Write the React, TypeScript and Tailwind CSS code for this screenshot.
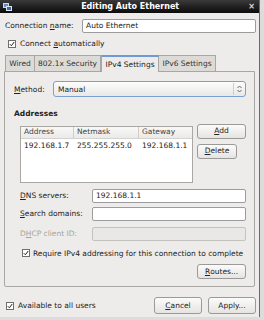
import React from 'react';

const font = { fontFamily: '"DejaVu Sans", sans-serif' };

const Check = () => (
  <span className="inline-flex items-center justify-center w-[8px] h-[8px] border border-[#6e6e6e] bg-white">
    <svg width="6" height="6" viewBox="0 0 6 6">
      <path d="M0.8 3.2 L2.4 4.8 L5.2 1" fill="none" stroke="#222" strokeWidth="1" />
    </svg>
  </span>
);

const Btn = ({ children, className = '' }: { children: React.ReactNode; className?: string }) => (
  <div
    className={`flex items-center justify-center border border-[#9a9a9a] rounded-[3px] bg-gradient-to-b from-[#fbfbfa] to-[#e6e4e1] text-[7.5px] text-[#222] ${className}`}
  >
    {children}
  </div>
);

const Field = ({ value = '', disabled = false, className = '' }: { value?: string; disabled?: boolean; className?: string }) => (
  <div
    className={`flex items-center px-[3px] border rounded-[2px] text-[7.5px] ${
      disabled ? 'border-[#c4c2bf] bg-[#e9e8e6]' : 'border-[#9c9c9c] bg-white'
    } ${className}`}
  >
    {value}
  </div>
);

export default function App() {
  return (
    <div className="w-[264px] h-[320px] bg-[#dcdcdc] overflow-hidden text-[#222] text-[7.5px]" style={font}>
      <div className="w-[260px] h-[317px] flex flex-col bg-[#edecea] border-r border-[#6a6a6a]">
        {/* title bar */}
        <div className="h-[13px] flex items-center bg-gradient-to-b from-[#3a3a3a] to-[#0c0c0c] px-[3px]">
          <div className="w-[9px] h-[8px] relative">
            <div className="absolute left-0 top-0 w-[6px] h-[5px] bg-[#6d8cbf] border border-[#cfd8e6]" />
            <div className="absolute left-[3px] top-[3px] w-[6px] h-[5px] bg-[#3e69b5] border border-[#dfe6f0]" />
          </div>
          <div className="flex-1 text-center text-white font-bold text-[8px]">Editing Auto Ethernet</div>
          <div className="text-[#ddd] text-[8px] font-bold pr-[1px]">×</div>
        </div>

        {/* connection name */}
        <div className="flex items-center mt-[6px] pl-[5px] pr-[3px]">
          <span className="w-[77px]">
            Connection <u>n</u>ame:
          </span>
          <Field value="Auto Ethernet" className="flex-1 h-[14px]" />
        </div>
        <div className="flex items-center gap-[4px] mt-[5px] pl-[8px]">
          <Check />
          <span>
            Connect <u>a</u>utomatically
          </span>
        </div>

        {/* tabs */}
        <div className="flex items-end mt-[5px] pl-[5px] h-[17px]">
          <div className="h-[16px] flex items-center justify-center text-[#333] bg-[#dddbd7] border border-[#a9a7a3] border-b-0 w-[30px]">Wired</div>
          <div className="h-[16px] flex items-center justify-center text-[#333] bg-[#dddbd7] border border-[#a9a7a3] border-l-0 border-b-0 w-[66px]">802.1x Security</div>
          <div className="h-[17px] flex items-center justify-center bg-[#edecea] border border-[#a9a7a3] border-t-[#6f9ad6] border-t-2 border-b-0 w-[58px] relative top-[1px] z-10">IPv4 Settings</div>
          <div className="h-[16px] flex items-center justify-center text-[#333] bg-[#dddbd7] border border-[#a9a7a3] border-l-0 border-b-0 w-[57px]">IPv6 Settings</div>
        </div>

        {/* panel */}
        <div className="mx-[4px] h-[216px] border border-[#a9a7a3] rounded-b-[2px] flex flex-col pl-[9px] pr-[8px]">
          <div className="flex items-center mt-[9px]">
            <span className="w-[39px]">
              <u>M</u>ethod:
            </span>
            <div className="flex-1 h-[16px] flex items-center border border-[#7c9fd3] rounded-[3px] bg-gradient-to-b from-[#fdfdfd] to-[#e9e8e6] pl-[4px]">
              <span className="flex-1">Manual</span>
              <span className="w-[1px] h-[12px] bg-[#cfcdca]" />
              <svg width="11" height="10" viewBox="0 0 11 10">
                <path d="M3.5 4 L5.5 2 L7.5 4 M3.5 6 L5.5 8 L7.5 6" fill="none" stroke="#555" strokeWidth="0.9" />
              </svg>
            </div>
          </div>

          <div className="font-bold mt-[11px]">Addresses</div>

          <div className="flex mt-[6px] pl-[6px] gap-[4px]">
            <div className="w-[175px] h-[57px] border border-[#a9a7a3] bg-white">
              <div className="h-[12px] flex text-[#444] bg-gradient-to-b from-[#f8f8f7] to-[#ebeae8] border-b border-[#d5d3cf]">
                <div className="w-[53px] pl-[3px] flex items-center border-r border-[#cfcdca]">Address</div>
                <div className="w-[65px] pl-[3px] flex items-center border-r border-[#cfcdca]">Netmask</div>
                <div className="flex-1 pl-[3px] flex items-center">Gateway</div>
              </div>
              <div className="flex mt-[1px]">
                <div className="w-[53px] pl-[3px]">192.168.1.7</div>
                <div className="w-[65px] pl-[3px]">255.255.255.0</div>
                <div className="flex-1 pl-[3px]">192.168.1.1</div>
              </div>
            </div>
            <div className="flex flex-col gap-[5px] -mt-[2px]">
              <Btn className="w-[49px] h-[15px]">
                <u>A</u>dd
              </Btn>
              <Btn className="w-[40px] h-[15px]">
                <u>D</u>elete
              </Btn>
            </div>
          </div>

          <div className="flex items-center mt-[6px] pl-[6px]">
            <span className="w-[72px]">
              <u>D</u>NS servers:
            </span>
            <Field value="192.168.1.1" className="flex-1 h-[14px]" />
          </div>
          <div className="flex items-center mt-[4px] pl-[6px]">
            <span className="w-[72px]">
              <u>S</u>earch domains:
            </span>
            <Field className="flex-1 h-[14px]" />
          </div>
          <div className="flex items-center mt-[6px] pl-[6px]">
            <span className="w-[72px] text-[#a5a3a0]">
              D<u>H</u>CP client ID:
            </span>
            <Field disabled className="flex-1 h-[14px]" />
          </div>
          <div className="flex items-center gap-[3px] mt-[7px] pl-[8px] whitespace-nowrap">
            <Check />
            <span>Require IPv4 addressing for this connection to complete</span>
          </div>
          <div className="flex justify-end mt-[5px]">
            <Btn className="w-[49px] h-[15px]">
              <u>R</u>outes...
            </Btn>
          </div>
        </div>

        {/* bottom */}
        <div className="flex items-center mt-[10px] pl-[6px] pr-[3px]">
          <div className="flex items-center gap-[4px] flex-1">
            <Check />
            <span>Available to all users</span>
          </div>
          <Btn className="w-[48px] h-[17px] mr-[6px]">
            <u>C</u>ancel
          </Btn>
          <Btn className="w-[48px] h-[17px]">Apply...</Btn>
        </div>
      </div>
    </div>
  );
}
